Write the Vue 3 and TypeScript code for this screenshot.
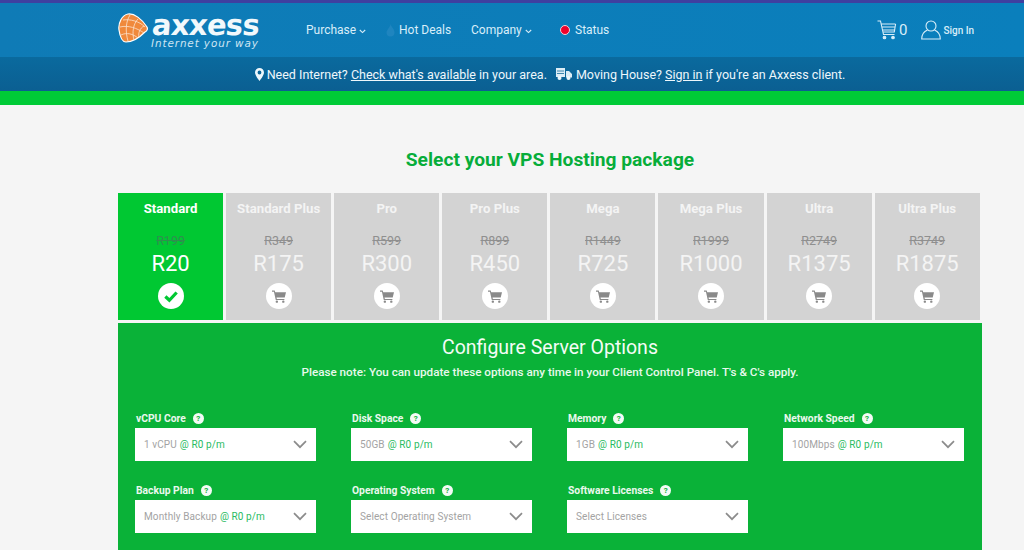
<script setup lang="ts">
interface Pack { name: string; old: string; price: string; active?: boolean }
interface Opt { label: string; value: string; price?: string }
const packs: Pack[] = [
  { name: 'Standard', old: 'R199', price: 'R20', active: true },
  { name: 'Standard Plus', old: 'R349', price: 'R175' },
  { name: 'Pro', old: 'R599', price: 'R300' },
  { name: 'Pro Plus', old: 'R899', price: 'R450' },
  { name: 'Mega', old: 'R1449', price: 'R725' },
  { name: 'Mega Plus', old: 'R1999', price: 'R1000' },
  { name: 'Ultra', old: 'R2749', price: 'R1375' },
  { name: 'Ultra Plus', old: 'R3749', price: 'R1875' },
]
const opts: Opt[] = [
  { label: 'vCPU Core', value: '1 vCPU', price: '@ R0 p/m' },
  { label: 'Disk Space', value: '50GB', price: '@ R0 p/m' },
  { label: 'Memory', value: '1GB', price: '@ R0 p/m' },
  { label: 'Network Speed', value: '100Mbps', price: '@ R0 p/m' },
  { label: 'Backup Plan', value: 'Monthly Backup', price: '@ R0 p/m' },
  { label: 'Operating System', value: 'Select Operating System' },
  { label: 'Software Licenses', value: 'Select Licenses' },
]
</script>

<template>
  <div class="page">
    <header class="top">
      <div class="logo">
        <svg class="globe" width="30" height="30" viewBox="0 0 30 30">
          <path d="M10 1C16 0 24 6 29 14C30 16 29 18 27 19C21 25 14 29 8 29C4 29 2 24 1 17C0 10 4 2 10 1Z" fill="#f0893c" stroke="#fff" stroke-width="1.2"/>
          <path d="M5 7C12 6 21 8 27 14M2 14C10 12 19 15 26 20M3 22C9 19 15 21 20 25M12 2C8 8 7 18 10 28M20 6C15 11 14 20 16 27M26 13C22 15 20 20 21 24" fill="none" stroke="#fbe3d0" stroke-width=".8"/>
        </svg>
        <div class="logotext">
          <span class="brand">axxess</span>
          <span class="tag">Internet your way</span>
        </div>
      </div>
      <nav class="nav">
        <span class="item purchase"><span>Purchase</span><svg class="caret" width="7" height="5" viewBox="0 0 7 5"><path d="M.8 1l2.7 2.6L6.2 1" fill="none" stroke="#d6ecf8" stroke-width="1.1"/></svg></span>
        <span class="item hot"><svg width="9" height="13" viewBox="0 0 9 13"><path d="M4.5 0C5 3 8.500 5 8.500 8.500A4 4 0 0 1 .5 8.500C.5 6 3.800 4 4.500 0Z" fill="#1f85bf"/></svg><span>Hot Deals</span></span>
        <span class="item company"><span>Company</span><svg class="caret" width="7" height="5" viewBox="0 0 7 5"><path d="M.8 1l2.7 2.6L6.2 1" fill="none" stroke="#d6ecf8" stroke-width="1.1"/></svg></span>
        <span class="item status"><i class="dot"></i><span>Status</span></span>
      </nav>
      <div class="account">
        <svg width="20" height="20" viewBox="0 0 20 20" fill="none" stroke="#d9eef9" stroke-width="1.1">
          <path d="M.5 1H3.5L6.5 14.5H17.5M4.2 4H18.5M5 7H18M5.6 10H17.5M18.6 4L17.3 12H6"/>
          <circle cx="7.5" cy="17.5" r="1.3" fill="#d9eef9"/><circle cx="16" cy="17.5" r="1.3" fill="#d9eef9"/>
        </svg>
        <span class="count">0</span>
        <svg class="user" width="20" height="20" viewBox="0 0 20 20" fill="none" stroke="#d9eef9" stroke-width="1.1">
          <circle cx="10" cy="6" r="5"/>
          <path d="M6.5 10C3 11.5 .7 14 .7 19H19.3C19.3 14 17 11.5 13.5 10"/>
        </svg>
        <span class="signin">Sign In</span>
      </div>
    </header>

    <div class="strip">
      <svg width="9" height="13" viewBox="0 0 9 13"><path fill-rule="evenodd" d="M4.5 0A4.5 4.5 0 0 0 0 4.5C0 7.5 4.5 13 4.5 13S9 7.5 9 4.5A4.5 4.5 0 0 0 4.5 0ZM4.5 2.6a1.9 1.9 0 1 1 0 3.8a1.9 1.9 0 0 1 0-3.8Z" fill="#eef7fc"/></svg>
      <span class="s1">Need Internet? <u>Check what's available</u> in your area.</span>
      <svg class="van" width="16" height="14" viewBox="0 0 16 14"><path d="M0 1H9V10H0ZM10 4H13L16 7V10.500H10Z" fill="#dcedf6"/><circle cx="3.500" cy="11" r="2" fill="#eef7fc"/><circle cx="12.500" cy="11" r="2" fill="#eef7fc"/><path d="M1 4H8M1 6.500H8" stroke="#3f86ad"/></svg>
      <span>Moving House? <u>Sign in</u> if you're an Axxess client.</span>
    </div>
    <div class="greenbar"></div>

    <main class="main">
      <h1>Select your VPS Hosting package</h1>
      <div class="packs">
        <div v-for="p in packs" :key="p.name" class="pack" :class="{ active: p.active }">
          <div class="name">{{ p.name }}</div>
          <div class="old">{{ p.old }}</div>
          <div class="price">{{ p.price }}</div>
          <div class="circle">
            <svg v-if="p.active" width="16" height="13" viewBox="0 0 14 12"><path d="M1.800 6L5.500 9.500L12.200 2.300" fill="none" stroke="#00c832" stroke-width="3"/></svg>
            <svg v-else width="14" height="13" viewBox="0 0 13 12"><path d="M0 .5H2.500L3 2H13L11.800 7H4.200L4.500 8.300H11.500V9.300H3.500L1.800 1.500H0Z" fill="#8a8a8a"/><circle cx="4.500" cy="10.800" r="1.100" fill="#8a8a8a"/><circle cx="10.500" cy="10.800" r="1.100" fill="#8a8a8a"/></svg>
          </div>
        </div>
      </div>

      <section class="config">
        <h2>Configure Server Options</h2>
        <p>Please note: You can update these options any time in your Client Control Panel. T's &amp; C's apply.</p>
        <div class="grid">
          <div v-for="o in opts" :key="o.label" class="field">
            <div class="label">{{ o.label }}<span class="help">?</span></div>
            <div class="select">
              <span class="text"><span class="val">{{ o.value }}</span><span v-if="o.price" class="opt-price">{{ o.price }}</span></span>
              <svg width="14" height="9" viewBox="0 0 14 9"><path d="M1 1.200L7 7.200L13 1.200" fill="none" stroke="#8c8c8c" stroke-width="1.700"/></svg>
            </div>
          </div>
        </div>
      </section>
    </main>
  </div>
</template>

<style>
html, body { margin: 0; overflow: hidden; background: #f5f5f5; }
</style>

<style scoped>
.page {
  width: 1024px;
  height: 550px;
  overflow: hidden;
  background: #f5f5f5;
  font-family: Roboto, "Liberation Sans", sans-serif;
}
.top {
  height: 54px;
  border-top: 3px solid #3f3fa0;
  background: linear-gradient(90deg, #0f7bb6, #0a7fbc);
  display: flex;
  align-items: center;
  color: #d9eef9;
}
.logo {
  margin-left: 118px;
  width: 188px;
  display: flex;
  align-items: flex-start;
  flex: none;
}
.globe { margin-top: 2px; flex: none; }
.logotext { display: flex; flex-direction: column; margin-left: 3px; }
.brand {
  font: bold 29px/26px "DejaVu Sans", sans-serif;
  color: #f2f9fc;
  letter-spacing: -.7px;
  transform: skewX(-5deg);
  transform-origin: left bottom;
  margin-top: 1px;
}
.tag {
  font: italic 10.400px/12px "DejaVu Sans", sans-serif;
  color: #cfe6f3;
  letter-spacing: .9px;
  margin-top: -1px;
}
.nav { width: 571px; display: flex; align-items: center; font-size: 12px; flex: none; }
.item { display: flex; align-items: center; white-space: nowrap; }
.caret { margin: 2px 0 0 3px; }
.purchase { width: 80px; }
.hot { width: 85px; gap: 4px; }
.company { width: 89px; }
.status { gap: 5px; }
.dot {
  width: 10px; height: 10px; border-radius: 50%;
  background: #f0002a;
  border: 1px solid #f3cfd6;
  box-sizing: border-box;
}
.account { display: flex; align-items: center; }
.count { font-size: 15px; margin-left: 2px; }
.user { margin-left: 14px; }
.signin { font-size: 10px; font-weight: 500; margin-left: 2px; }
.strip {
  height: 34px;
  background: linear-gradient(180deg, #0a6a9e, #0b5f92);
  color: #eef7fc;
  font-size: 12.500px;
  display: flex;
  align-items: center;
  justify-content: center;
  padding-left: 76px;
  box-sizing: border-box;
  white-space: pre;
}
.s1 { margin-left: 3px; }
.van { margin: 0 4px 0 9px; }
.greenbar { height: 14px; background: #00cb37; }
.main { width: 864px; margin-left: 118px; }
h1 {
  margin: 0;
  padding-top: 44px;
  height: 44px;
  font-size: 19.200px;
  line-height: 22px;
  font-weight: 700;
  color: #07ad3a;
  text-align: center;
}
.packs { display: flex; gap: 3px; }
.pack {
  width: 105.100px;
  height: 127px;
  flex: none;
  background: #d3d3d3;
  color: #f4f4f4;
  display: flex;
  flex-direction: column;
  align-items: center;
  box-sizing: border-box;
  padding-top: 8px;
}
.pack.active { background: #00c832; color: #fff; }
.name { font-size: 13.200px; font-weight: 700; line-height: 16px; }
.old {
  margin-top: 17px;
  font-size: 12.500px;
  line-height: 14px;
  color: #8f8f8f;
  text-decoration: line-through;
}
.active .old { color: #2f8f4f; }
.price { font-size: 22px; line-height: 26px; margin-top: 3px; }
.circle {
  width: 26px; height: 26px; border-radius: 50%;
  background: #fff;
  margin-top: 6px;
  display: flex; align-items: center; justify-content: center;
}
.config {
  margin-top: 3px;
  height: 300px;
  background: #0ab238;
  color: #f4fcf6;
  padding: 14px 17px 0;
  box-sizing: border-box;
}
h2 {
  margin: 0;
  font-size: 19.500px;
  font-weight: 400;
  line-height: 22px;
  text-align: center;
}
.config p {
  margin: 5px 0 0;
  font-size: 11.700px;
  font-weight: 500;
  line-height: 16px;
  text-align: center;
  color: #e8f9ec;
}
.grid {
  margin-top: 28px;
  display: grid;
  grid-template-columns: repeat(4, 181px);
  column-gap: 35px;
  row-gap: 19px;
}
.label {
  display: flex;
  align-items: center;
  height: 20px;
  padding-left: 1px;
  font-size: 10.300px;
  font-weight: 700;
  color: #eaf8ee;
}
.help {
  width: 11px; height: 11px; border-radius: 50%;
  background: #f4fbf6;
  color: #0ab238;
  font-size: 8px;
  font-weight: 700;
  line-height: 11px;
  text-align: center;
  margin-left: 7px;
}
.select {
  height: 33px;
  background: #fff;
  display: flex;
  align-items: center;
  justify-content: space-between;
  padding: 0 9px;
  box-sizing: border-box;
  font-size: 10px;
  letter-spacing: .1px;
}
.text { display: flex; gap: 3px; }
.val { color: #a3a3a3; }
.opt-price { color: #29bb5f; }
</style>
